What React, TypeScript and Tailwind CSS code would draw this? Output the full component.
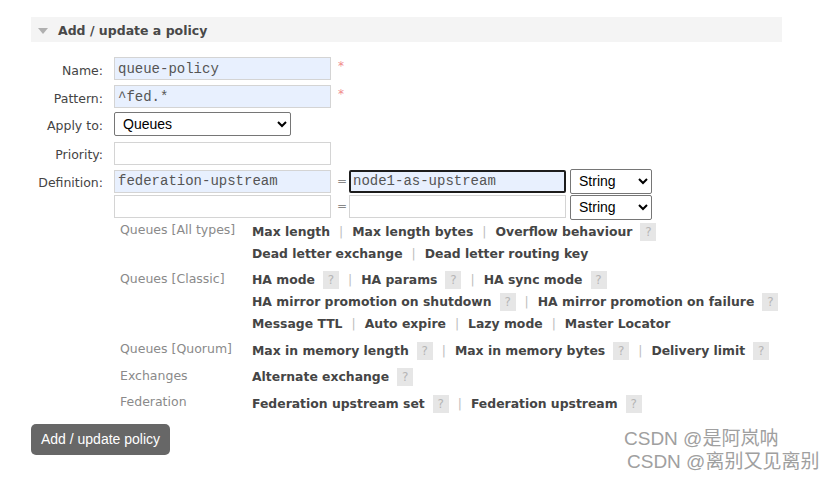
import { type ReactNode } from 'react';

type Item = { label: string; help?: boolean };

const HELP_GROUPS: { title: string; lines: Item[][] }[] = [
  {
    title: 'Queues [All types]',
    lines: [
      [{ label: 'Max length' }, { label: 'Max length bytes' }, { label: 'Overflow behaviour', help: true }],
      [{ label: 'Dead letter exchange' }, { label: 'Dead letter routing key' }],
    ],
  },
  {
    title: 'Queues [Classic]',
    lines: [
      [
        { label: 'HA mode', help: true },
        { label: 'HA params', help: true },
        { label: 'HA sync mode', help: true },
      ],
      [
        { label: 'HA mirror promotion on shutdown', help: true },
        { label: 'HA mirror promotion on failure', help: true },
      ],
      [{ label: 'Message TTL' }, { label: 'Auto expire' }, { label: 'Lazy mode' }, { label: 'Master Locator' }],
    ],
  },
  {
    title: 'Queues [Quorum]',
    lines: [
      [
        { label: 'Max in memory length', help: true },
        { label: 'Max in memory bytes', help: true },
        { label: 'Delivery limit', help: true },
      ],
    ],
  },
  { title: 'Exchanges', lines: [[{ label: 'Alternate exchange', help: true }]] },
  {
    title: 'Federation',
    lines: [[{ label: 'Federation upstream set', help: true }, { label: 'Federation upstream', help: true }]],
  },
];

function HelpBox() {
  return (
    <span className="ml-[8px] inline-flex h-[18px] w-[16px] items-center justify-center bg-[#e6e6e6] text-[12px] font-normal text-[#b5b5b5]">
      ?
    </span>
  );
}

function FormRow({ label, children, className = '' }: { label: string; children: ReactNode; className?: string }) {
  return (
    <div className={`flex items-center ${className}`}>
      <label className="w-[72px] pt-[5px] text-right text-[12.5px] text-[#444]">{label}</label>
      <div className="ml-[11px] flex h-full items-center">{children}</div>
    </div>
  );
}

const inputBase =
  'h-[23px] w-[217px] border border-[#d4d4d4] px-[3px] font-["Liberation_Mono",monospace] text-[14px] text-[#555] outline-none';

const selectBase =
  "rounded-[2px] border border-[#767676] bg-white pl-[4px] font-['Liberation_Sans',sans-serif] text-[14px] text-black";

export default function App() {
  return (
    <div className="relative min-h-screen bg-white pl-[31px] pt-[17px] font-['DejaVu_Sans',sans-serif]">
      <div className="w-[751px]">
        <div className="flex h-[25px] items-center bg-[#f4f4f4] pl-[7px] pt-[3px]">
          <span className="h-0 w-0 border-l-[5px] border-r-[5px] border-t-[6px] border-l-transparent border-r-transparent border-t-[#b0b0b0]" />
          <h2 className="ml-[10px] text-[12.5px] font-bold text-[#484848]">Add / update a policy</h2>
        </div>

        <div className="mt-[14px]">
          <FormRow label="Name:" className="h-[23px] pt-[2px]">
            <input className={`${inputBase} bg-[#e8f0fe]`} defaultValue="queue-policy" />
            <span className="ml-[7px] -mt-[6px] text-[12px] text-[#f08a8a]">*</span>
          </FormRow>
          <FormRow label="Pattern:" className="mt-[6px] h-[23px]">
            <input className={`${inputBase} bg-[#e8f0fe]`} defaultValue="^fed.*" />
            <span className="ml-[7px] -mt-[6px] text-[12px] text-[#f08a8a]">*</span>
          </FormRow>
          <FormRow label="Apply to:" className="mt-[4px] h-[24px]">
            <select className={`${selectBase} h-[24px] w-[177px]`} defaultValue="queues">
              <option value="queues">Queues</option>
            </select>
          </FormRow>
          <FormRow label="Priority:" className="mt-[6px] h-[22px]">
            <input className={`${inputBase} h-[22px] bg-white`} />
          </FormRow>
          <FormRow label="Definition:" className="mt-[6px] h-[22px]">
            <input className={`${inputBase} h-[22px] bg-[#e8f0fe]`} defaultValue="federation-upstream" />
            <span className="ml-[6px] w-[12px] text-[12px] text-[#888]">=</span>
            <input
              className="h-[23px] w-[217px] rounded-[2px] border-2 border-[#1d1d1d] bg-[#e8f0fe] px-[2px] font-['Liberation_Mono',monospace] text-[14px] text-[#555] outline-none"
              defaultValue="node1-as-upstream"
            />
            <select className={`${selectBase} ml-[4px] h-[25px] w-[82px]`} defaultValue="string">
              <option value="string">String</option>
            </select>
          </FormRow>
          <FormRow label="" className="mt-[3px] h-[22px]">
            <input className={`${inputBase} h-[22px] bg-white`} />
            <span className="ml-[6px] w-[12px] text-[12px] text-[#888]">=</span>
            <input className={`${inputBase} h-[22px] bg-white`} />
            <select className={`${selectBase} ml-[4px] mt-[2px] h-[25px] w-[82px]`} defaultValue="string">
              <option value="string">String</option>
            </select>
          </FormRow>
        </div>

        <div className="ml-[89px] mt-[4px] flex flex-col gap-[4.5px]">
          {HELP_GROUPS.map((group) => (
            <div key={group.title} className="flex">
              <div className="w-[132px] whitespace-nowrap text-[12.5px] leading-[18px] text-[#8a8a8a]">
                {group.title}
              </div>
              <div className="flex flex-col">
                {group.lines.map((line, i) => (
                  <div
                    key={i}
                    className="flex h-[22px] items-center whitespace-nowrap text-[12.4px] font-bold text-[#454545]"
                  >
                    {line.map((item, j) => (
                      <span key={item.label} className="flex items-center">
                        {j > 0 && <span className="mx-[9px] font-normal text-[#bdbdbd]">|</span>}
                        {item.label}
                        {item.help && <HelpBox />}
                      </span>
                    ))}
                  </div>
                ))}
              </div>
            </div>
          ))}
        </div>

        <button className="mt-[9px] flex h-[31px] w-[139px] items-center justify-center rounded-[5px] bg-[#676767] font-['Liberation_Sans',sans-serif] text-[14px] text-white">
          Add / update policy
        </button>
      </div>

      <div className="absolute left-[624px] top-[427px] font-['Liberation_Sans','Noto_Sans_CJK_SC',sans-serif] text-[19px] leading-[23px] text-[#a0a0a0]">
        <div>CSDN @是阿岚呐</div>
        <div className="ml-[3px]">CSDN @离别又见离别</div>
      </div>
    </div>
  );
}
